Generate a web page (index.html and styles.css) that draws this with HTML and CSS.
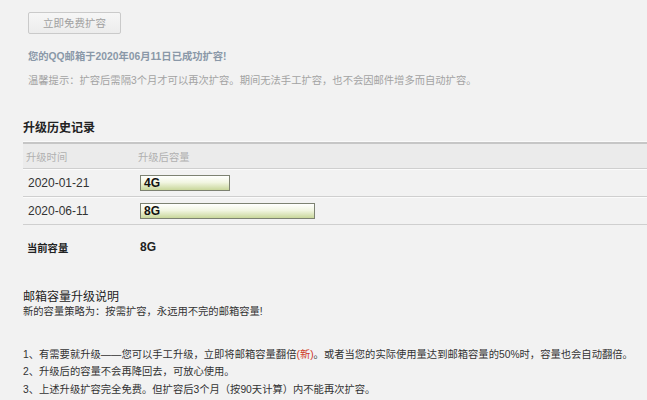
FILE: index.html
```html
<!DOCTYPE html>
<html lang="zh-CN">
<head>
<meta charset="utf-8">
<title>邮箱扩容</title>
<link rel="stylesheet" href="styles.css">
</head>
<body>
<div class="page">
  <div class="top">
    <button class="btn" type="button">立即免费扩容</button>
    <p class="success">您的QQ邮箱于2020年06月11日已成功扩容!</p>
    <p class="tip">温馨提示：扩容后需隔3个月才可以再次扩容。期间无法手工扩容，也不会因邮件增多而自动扩容。</p>
  </div>

  <h2 class="heading">升级历史记录</h2>
  <div class="table">
    <div class="row head">
      <div class="c1">升级时间</div>
      <div class="c2">升级后容量</div>
    </div>
    <div class="row">
      <div class="c1 date">2020-01-21</div>
      <div class="c2"><span class="bar bar-4">4G</span></div>
    </div>
    <div class="row">
      <div class="c1 date">2020-06-11</div>
      <div class="c2"><span class="bar bar-8">8G</span></div>
    </div>
  </div>
  <div class="current">
    <div class="c1 cur-label">当前容量</div>
    <div class="c2 cur-value">8G</div>
  </div>

  <div class="explain">
    <h3 class="ex-title">邮箱容量升级说明</h3>
    <p class="ex-sub">新的容量策略为：按需扩容，永远用不完的邮箱容量!</p>
    <ol class="list">
      <li>1、有需要就升级——您可以手工升级，立即将邮箱容量翻倍<span class="new">(新)</span>。或者当您的实际使用量达到邮箱容量的50%时，容量也会自动翻倍。</li>
      <li>2、升级后的容量不会再降回去，可放心使用。</li>
      <li>3、上述升级扩容完全免费。但扩容后3个月（按90天计算）内不能再次扩容。</li>
    </ol>
  </div>
</div>
</body>
</html>
```

FILE: styles.css
```css
html, body {
  margin: 0;
  padding: 0;
  background: #f2f2f2;
}
body {
  font-family: "Liberation Sans", "Noto Sans CJK SC", sans-serif;
  font-size: 10.3px;
  color: #333;
  width: 647px;
  height: 400px;
  overflow: hidden;
}
p, h2, h3, ol, li {
  margin: 0;
  padding: 0;
}
.page {
  padding: 12px 0 0 23px;
}
.top {
  padding-left: 5px;
}
.btn {
  display: block;
  width: 93px;
  height: 22px;
  margin: 0;
  padding: 0;
  border: 1px solid #cacaca;
  border-radius: 2px;
  background: linear-gradient(#f6f6f6, #ececec);
  color: #a0a0a0;
  font-family: "Noto Sans CJK SC", sans-serif;
  font-size: 10.5px;
  line-height: 20px;
  text-align: center;
}
.success {
  margin-top: 15px;
  line-height: 16px;
  font-weight: bold;
  color: #8a98a8;
}
.tip {
  margin-top: 8px;
  line-height: 16px;
  color: #a3a3a3;
}
.heading {
  margin-top: 30px;
  font-size: 12px;
  line-height: 16px;
  font-weight: bold;
  color: #222;
  font-family: "Noto Sans CJK SC", sans-serif;
}
.table {
  margin-top: 7px;
  border-top: 2px solid #c6c6c6;
  box-shadow: 0 -1px 0 #fafafa;
}
.row {
  display: flex;
  align-items: center;
  height: 26px;
  border-top: 1px solid #fbfbfb;
  border-bottom: 1px solid #cfcfcf;
}
.row.head {
  height: 24px;
  border-top: 0;
  background: #ebebeb;
  color: #b0b0b0;
}
.c1 {
  width: 117px;
  flex: none;
  padding-left: 4px;
  box-sizing: border-box;
}
.head .c1 {
  padding-left: 3px;
}
.head .c2 {
  margin-left: -2px;
}
.c2 {
  flex: 1;
}
.date {
  font-size: 12px;
  padding-left: 5px;
  color: #333;
}
.bar {
  display: block;
  height: 14px;
  border: 1px solid #7d8272;
  background: linear-gradient(#ffffff 0%, #f2f6e2 45%, #c9d79b 100%);
  font-size: 12px;
  font-weight: bold;
  line-height: 14px;
  padding-left: 3px;
  box-sizing: content-box;
  color: #111;
}
.bar-4 { width: 85px; }
.bar-8 { width: 170px; }
.current {
  display: flex;
  align-items: center;
  height: 20px;
  margin-top: 12px;
  font-weight: bold;
}
.cur-label {
  color: #222;
}
.cur-value {
  font-size: 12px;
  color: #222;
}
.explain {
  margin-top: 31px;
}
.ex-title {
  font-size: 12px;
  line-height: 16px;
  font-weight: normal;
  color: #222;
  font-family: "Noto Sans CJK SC", sans-serif;
}
.ex-sub {
  line-height: 16px;
  color: #333;
}
.list {
  list-style: none;
  margin-top: 26px;
}
.list li {
  line-height: 17.3px;
  color: #333;
  white-space: nowrap;
}
.new {
  color: #d03a2a;
}
```
